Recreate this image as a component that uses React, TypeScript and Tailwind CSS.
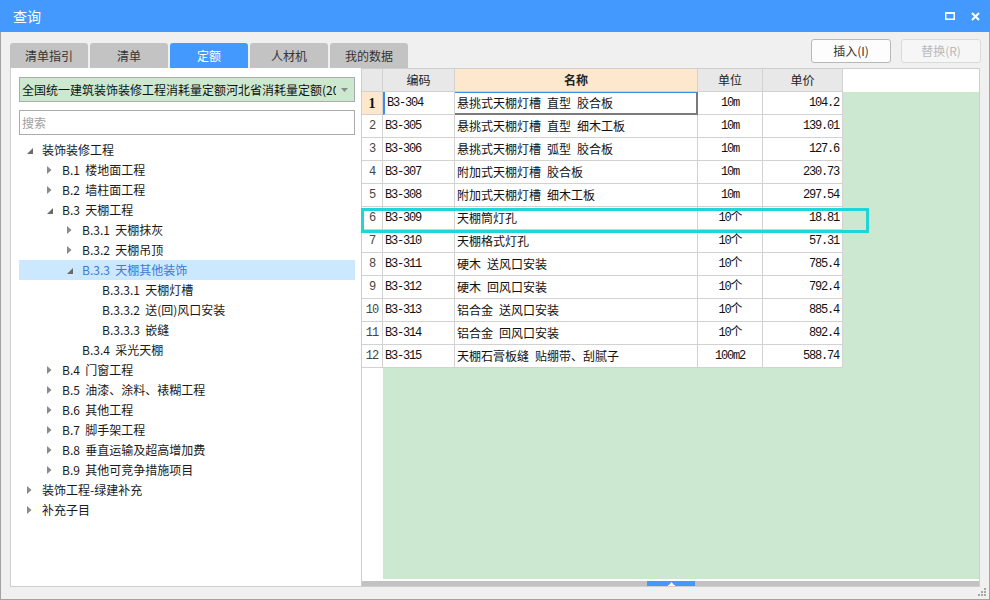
import React from 'react'

const CN = { fontFamily: '"Noto Sans CJK SC", "Microsoft YaHei", sans-serif' }
const MONO = { fontFamily: '"Liberation Mono", "Noto Sans CJK SC", monospace' }

const TABS = ['清单指引', '清单', '定额', '人材机', '我的数据']

type TreeNode = { label: string; level: number; arrow: 'open' | 'closed' | 'none'; selected?: boolean }

const TREE: TreeNode[] = [
  { label: '装饰装修工程', level: 0, arrow: 'open' },
  { label: 'B.1 楼地面工程', level: 1, arrow: 'closed' },
  { label: 'B.2 墙柱面工程', level: 1, arrow: 'closed' },
  { label: 'B.3 天棚工程', level: 1, arrow: 'open' },
  { label: 'B.3.1 天棚抹灰', level: 2, arrow: 'closed' },
  { label: 'B.3.2 天棚吊顶', level: 2, arrow: 'closed' },
  { label: 'B.3.3 天棚其他装饰', level: 2, arrow: 'open', selected: true },
  { label: 'B.3.3.1 天棚灯槽', level: 3, arrow: 'none' },
  { label: 'B.3.3.2 送(回)风口安装', level: 3, arrow: 'none' },
  { label: 'B.3.3.3 嵌缝', level: 3, arrow: 'none' },
  { label: 'B.3.4 采光天棚', level: 2, arrow: 'none' },
  { label: 'B.4 门窗工程', level: 1, arrow: 'closed' },
  { label: 'B.5 油漆、涂料、裱糊工程', level: 1, arrow: 'closed' },
  { label: 'B.6 其他工程', level: 1, arrow: 'closed' },
  { label: 'B.7 脚手架工程', level: 1, arrow: 'closed' },
  { label: 'B.8 垂直运输及超高增加费', level: 1, arrow: 'closed' },
  { label: 'B.9 其他可竞争措施项目', level: 1, arrow: 'closed' },
  { label: '装饰工程-绿建补充', level: 0, arrow: 'closed' },
  { label: '补充子目', level: 0, arrow: 'closed' },
]

const ROWS: [string, string, string, string][] = [
  ['B3-304', '悬挑式天棚灯槽 直型 胶合板', '10m', '104.2'],
  ['B3-305', '悬挑式天棚灯槽 直型 细木工板', '10m', '139.01'],
  ['B3-306', '悬挑式天棚灯槽 弧型 胶合板', '10m', '127.6'],
  ['B3-307', '附加式天棚灯槽 胶合板', '10m', '230.73'],
  ['B3-308', '附加式天棚灯槽 细木工板', '10m', '297.54'],
  ['B3-309', '天棚筒灯孔', '10个', '18.81'],
  ['B3-310', '天棚格式灯孔', '10个', '57.31'],
  ['B3-311', '硬木 送风口安装', '10个', '785.4'],
  ['B3-312', '硬木 回风口安装', '10个', '792.4'],
  ['B3-313', '铝合金 送风口安装', '10个', '885.4'],
  ['B3-314', '铝合金 回风口安装', '10个', '892.4'],
  ['B3-315', '天棚石膏板缝 贴绷带、刮腻子', '100m2', '588.74'],
]

function Arrow({ kind }: { kind: TreeNode['arrow'] }) {
  if (kind === 'none') return null
  if (kind === 'open')
    return (
      <svg width="6" height="6" viewBox="0 0 6 6" className="mt-[2px]">
        <path d="M6 0 L6 6 L0 6 Z" fill="#6b6b6b" />
      </svg>
    )
  return (
    <svg width="5" height="8" viewBox="0 0 5 8">
      <path d="M0 0 L4.5 4 L0 8 Z" fill="#8a8a8a" />
    </svg>
  )
}

function TitleBar() {
  return (
    <div className="flex h-[32px] shrink-0 items-center bg-[#4499fe] pl-[13px] pr-[10px] text-white">
      <span className="text-[14px]" style={CN}>查询</span>
      <div className="ml-auto flex items-center gap-[16px]">
        <svg width="10" height="8" viewBox="0 0 10 8">
          <rect x="0.75" y="1" width="8.5" height="6.25" fill="none" stroke="white" strokeWidth="1.5" />
          <rect x="0" y="0" width="10" height="2" fill="white" />
        </svg>
        <svg width="9" height="9" viewBox="0 0 9 9">
          <path d="M1 1 L8 8 M8 1 L1 8" stroke="white" strokeWidth="2" />
        </svg>
      </div>
    </div>
  )
}

function Toolbar() {
  return (
    <div className="flex h-[36px] shrink-0 items-end pl-[9px] pr-[8px]">
      <div className="flex gap-[2px]">
        {TABS.map((t) => (
          <div
            key={t}
            className={`flex h-[25px] w-[78px] items-center justify-center rounded-t-[3px] text-[12px] ${
              t === '定额' ? 'bg-[#4499fe] text-white' : 'bg-[#c3c3c3] text-[#333]'
            }`}
            style={CN}
          >
            {t}
          </div>
        ))}
      </div>
      <div className="mb-[5px] ml-auto flex gap-[10px]">
        <div
          className="flex h-[24px] w-[80px] items-center justify-center rounded-[3px] border border-[#b8b8b8] bg-[#fdfdfd] text-[12px] text-[#333]"
          style={CN}
        >
          插入(I)
        </div>
        <div
          className="flex h-[24px] w-[80px] items-center justify-center rounded-[3px] border border-[#dadada] bg-[#f6f6f6] text-[12px] text-[#b9b9b9]"
          style={CN}
        >
          替换(R)
        </div>
      </div>
    </div>
  )
}

function LeftPanel() {
  return (
    <div className="flex w-[351px] shrink-0 flex-col border-b border-l border-[#cfcfcf] bg-white">
      <div className="ml-[8px] mt-[9px] flex h-[25px] w-[336px] items-center border border-[#ababab] bg-[#cce8cf]">
        <div className="w-[316px] overflow-hidden whitespace-nowrap pl-[2px] text-[12px] text-[#111]" style={CN}>
          全国统一建筑装饰装修工程消耗量定额河北省消耗量定额(2012)
        </div>
        <svg width="7" height="4" viewBox="0 0 7 4" className="ml-[5px]">
          <path d="M0 0 L7 0 L3.5 4 Z" fill="#8a8a8a" />
        </svg>
      </div>
      <div className="ml-[8px] mt-[8px] flex h-[25px] w-[336px] items-center border border-[#ababab] pl-[2px] text-[12px] text-[#a0a0a0]" style={CN}>
        搜索
      </div>
      <div className="ml-[8px] mt-[5px] w-[336px]">
        {TREE.map((n) => (
          <div
            key={n.label}
            className={`flex h-[20px] items-center text-[12px] ${n.selected ? 'bg-[#cce8ff] text-[#3a7ad6]' : 'text-[#1a1a1a]'}`}
            style={{ ...CN, paddingLeft: 8 + n.level * 20 }}
          >
            <div className="flex w-[15px] shrink-0 items-center">
              <Arrow kind={n.arrow} />
            </div>
            <span className="whitespace-pre">{n.label.replace(' ', '  ')}</span>
          </div>
        ))}
      </div>
    </div>
  )
}

function Grid() {
  return (
    <div className="flex w-[619px] shrink-0 flex-col border border-[#cfcfcf] bg-white">
      {/* header */}
      <div className="flex h-[23px] shrink-0 text-[12px] text-[#222]" style={CN}>
        <div className="w-[21px] border-b border-r border-[#d2d2d2] bg-[#e8e8e8]" />
        <div className="flex w-[72px] items-center justify-center border-b border-r border-[#d2d2d2] bg-[#e8e8e8]">编码</div>
        <div className="flex w-[243px] items-center justify-center border-b border-r border-[#d2d2d2] bg-[#fde8cd] font-bold">名称</div>
        <div className="flex w-[65px] items-center justify-center border-b border-r border-[#d2d2d2] bg-[#e8e8e8]">单位</div>
        <div className="flex w-[80px] items-center justify-center border-b border-r border-[#d2d2d2] bg-[#e8e8e8]">单价</div>
        <div className="flex-1" />
      </div>
      {/* body */}
      <div className="flex h-[487px] shrink-0">
        <div className="w-[21px] shrink-0 bg-white">
          {ROWS.map((r, i) => (
            <div
              key={r[0]}
              className={`flex h-[23px] items-center justify-center border-b border-r border-[#d2d2d2] ${
                i === 0 ? 'bg-[#fde8cd] text-[14px] font-bold text-[#111]' : 'text-[12px] tracking-[-1px] text-[#444]'
              }`}
              style={i === 0 ? { fontFamily: '"Liberation Serif", serif' } : MONO}
            >
              {i + 1}
            </div>
          ))}
        </div>
        <div className="flex-1 bg-[#cde8d1]">
          {ROWS.map((r, i) => (
            <div key={r[0]} className="flex h-[23px] w-[460px] bg-white text-[#111]">
              <div
                className={`flex w-[72px] items-center border-b border-r border-[#d2d2d2] pl-[2px] text-[12px] tracking-[-1.2px] ${
                  i === 0 ? 'border-l-2 border-l-[#3b8cf0] pl-0' : ''
                }`}
                style={MONO}
              >
                {r[0]}
              </div>
              <div
                className={`flex w-[243px] items-center whitespace-pre pl-[2px] text-[12px] ${
                  i === 0
                    ? 'border-b-2 border-r-2 border-t border-[#7a7a7a] border-t-[#3b8cf0] pb-[1px]'
                    : 'border-b border-r border-[#d2d2d2]'
                }`}
                style={CN}
              >
                {r[1].split(' ').join('\u2002')}
              </div>
              <div
                className="flex w-[65px] items-center justify-center border-b border-r border-[#d2d2d2] text-[12px] tracking-[-1.2px]"
                style={MONO}
              >
                {r[2]}
              </div>
              <div
                className="flex w-[80px] items-center justify-end border-b border-r border-[#d2d2d2] pr-[3px] text-[12px] tracking-[-1.2px]"
                style={MONO}
              >
                {r[3]}
              </div>
            </div>
          ))}
        </div>
      </div>
      <div className="h-[2px] shrink-0" />
      {/* scrollbar */}
      <div className="flex h-[5px] shrink-0 bg-[#c2c2c2]">
        <div className="ml-[285px] flex h-[5px] w-[48px] items-center justify-center bg-[#4499fe]">
          <svg width="7" height="4" viewBox="0 0 7 4">
            <path d="M3.5 0 L6 3 L1 3 Z M0 3 L7 3 L7 4 L0 4 Z" fill="white" />
          </svg>
        </div>
      </div>
    </div>
  )
}

export default function App() {
  return (
    <div className="relative flex h-[600px] w-[990px] flex-col bg-[#f0f0f0]" style={CN}>
      <TitleBar />
      <div className="flex flex-1 flex-col border-x border-b border-[#a3a3a3]">
        <Toolbar />
        <div className="ml-[9px] flex h-[519px]">
          <LeftPanel />
          <Grid />
        </div>
      </div>
      {/* highlight frame over row 6 */}
      <div className="absolute left-[361px] top-[208px] h-[25px] w-[508px] border-[3px] border-[#1fd5d5]" />
      {/* resize grip */}
      <svg className="absolute left-[978px] top-[588px]" width="8" height="8" viewBox="0 0 8 8">
        <rect x="6" y="0" width="2" height="2" fill="#a6a6a6" />
        <rect x="3" y="3" width="2" height="2" fill="#a6a6a6" />
        <rect x="6" y="3" width="2" height="2" fill="#a6a6a6" />
        <rect x="0" y="6" width="2" height="2" fill="#a6a6a6" />
        <rect x="3" y="6" width="2" height="2" fill="#a6a6a6" />
        <rect x="6" y="6" width="2" height="2" fill="#a6a6a6" />
      </svg>
    </div>
  )
}
